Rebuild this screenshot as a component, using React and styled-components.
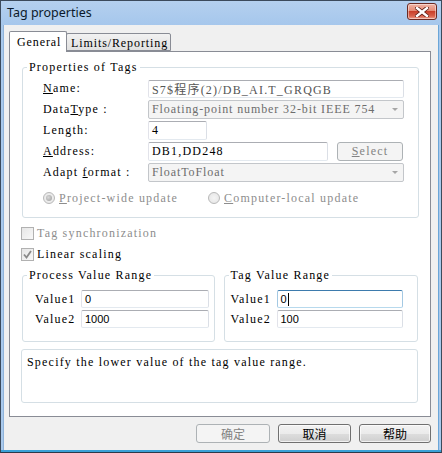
import React from 'react';
import styled, { createGlobalStyle } from 'styled-components';

const sim = `"Liberation Serif", "Noto Sans CJK SC", serif`;
const simText = `
  font-family: ${sim};
  font-size: 12px;
  letter-spacing: 1.2px;
`;

const GlobalStyle = createGlobalStyle`
  html, body {
    margin: 0;
    padding: 0;
    background: #fff;
  }
  * { box-sizing: border-box; }
`;

const Window = styled.div`
  width: 442px;
  height: 453px;
  display: flex;
  flex-direction: column;
  background: #a9c9ec;
  border: 1px solid #3b4a5c;
  border-bottom-color: #2b3a4a;
  box-shadow: inset 0 -2px 0 #3aa0d6;
`;

const TitleBar = styled.div`
  height: 24px;
  display: flex;
  align-items: center;
  justify-content: space-between;
  padding: 0 4px 0 6px;
  background: linear-gradient(#b4d0ef, #a6c7ec);
`;

const Title = styled.span`
  font-family: "Noto Sans", sans-serif;
  font-size: 12.5px;
  color: #0b1a2b;
  margin-top: -2px;
`;

const CloseButton = styled.div`
  width: 30px;
  height: 17px;
  margin-top: -3px;
  border: 1px solid #6b2a22;
  border-radius: 3px;
  background: linear-gradient(#f0b4a6 0%, #e58b75 45%, #c9402a 50%, #d8614a 80%, #eea08c 100%);
  display: flex;
  align-items: center;
  justify-content: center;
  box-shadow: inset 0 0 0 1px rgba(255, 255, 255, 0.45);
`;

const Client = styled.div`
  flex: 1;
  margin: 0 2px 2px 2px;
  background: #f0f0f0;
  border-left: 1px solid #8fb3da;
  border-right: 1px solid #6ba6d8;
  padding: 6px 7px 0 5px;
  display: flex;
  flex-direction: column;
`;

const TabRow = styled.div`
  display: flex;
  align-items: flex-end;
  position: relative;
  z-index: 1;
`;

const Tab = styled.div`
  ${simText}
  letter-spacing: 0.9px;
  color: #000;
  border: 1px solid #898c95;
  height: ${p => (p.$active ? '21px' : '18px')};
  padding: ${p => (p.$active ? '3px 0 0 7px' : '2px 0 0 4px')};
  width: ${p => p.$w}px;
  background: ${p => (p.$active ? '#fff' : 'linear-gradient(#f2f2f2, #e0e0e0)')};
  border-bottom: ${p => (p.$active ? 'none' : '1px solid #898c95')};
  margin-left: ${p => (p.$active ? '0' : '-1px')};
  margin-bottom: ${p => (p.$active ? '-1px' : '0')};
  border-radius: 2px 2px 0 0;
  white-space: nowrap;
`;

const Panel = styled.div`
  height: 366px;
  border: 1px solid #898c95;
  background: #fff;
  display: flex;
  flex-direction: column;
  padding: 0 12px 0 11px;
`;

const Group = styled.fieldset`
  margin: ${p => p.$mt || 0}px 0 0 ${p => p.$ml || 0}px;
  width: ${p => p.$w}px;
  border: 1px solid #d5dfe5;
  border-radius: 3px;
  padding: ${p => p.$pad};
  min-width: 0;
`;

const Legend = styled.legend`
  ${simText}
  line-height: 14px;
  color: #000;
  margin-left: ${p => p.$ml}px;
  padding: 0 2px;
`;

const FormGrid = styled.div`
  display: grid;
  grid-template-columns: 105px 256px;
  grid-auto-rows: 19px;
  row-gap: 2px;
  align-items: center;
`;

const Label = styled.span`
  ${simText}
  color: ${p => (p.$disabled ? '#8d8d8d' : '#000')};
  white-space: pre;
`;

const Field = styled.div`
  height: ${p => p.$h || 19}px;
  width: ${p => (p.$w ? `${p.$w}px` : '100%')};
  border: 1px solid;
  border-color: ${p => (p.$focus ? '#3d7bad #a4c9e3 #b7d9ed #a4c9e3' : '#abadb3 #dbdfe6 #e3e9ef #e2e3ea')};
  border-radius: 2px;
  background: #fff;
  display: flex;
  align-items: center;
  padding-left: 3px;
  ${p => (p.$sans ? 'font-family: "Liberation Sans", sans-serif; font-size: 11px;' : simText)}
  color: ${p => p.$color || '#000'};
  white-space: pre;
  overflow: hidden;
`;

const Combo = styled.div`
  height: 19px;
  border: 1px solid #c3c6ca;
  border-radius: 2px;
  background: #f4f4f4;
  display: flex;
  align-items: center;
  justify-content: space-between;
  padding: 0 5px 0 3px;
  ${simText}
  letter-spacing: 0.9px;
  color: #6d6d6d;
  white-space: pre;
`;

const Arrow = styled.span`
  width: 0;
  height: 0;
  border-left: 3px solid transparent;
  border-right: 3px solid transparent;
  border-top: 3px solid #a6a6a6;
`;

const AddressRow = styled.div`
  display: flex;
  align-items: center;
  gap: 9px;
`;

const SmallButton = styled.div`
  width: 66px;
  height: 19px;
  border: 1px solid #adb2b5;
  border-radius: 3px;
  background: #f4f4f4;
  display: flex;
  align-items: center;
  justify-content: center;
  ${simText}
  color: #838383;
`;

const U = styled.span`
  text-decoration: underline;
  text-underline-offset: 1px;
`;

const RadioRow = styled.div`
  display: flex;
  align-items: center;
  margin-top: 9px;
  height: 14px;
`;

const RadioItem = styled.div`
  display: flex;
  align-items: center;
  gap: 4px;
  width: ${p => p.$w}px;
`;

const Radio = styled.span`
  width: 12px;
  height: 12px;
  border-radius: 50%;
  border: 1px solid #b8b8b8;
  background: radial-gradient(circle, #f4f4f4 0%, #e4e4e4 100%);
  display: flex;
  align-items: center;
  justify-content: center;
  &::after {
    content: '';
    width: 6px;
    height: 6px;
    border-radius: 50%;
    background: ${p => (p.$on ? 'radial-gradient(circle at 40% 40%, #d8d8d8, #9c9c9c)' : 'transparent')};
  }
`;

const CheckRow = styled.div`
  display: flex;
  align-items: center;
  gap: 3px;
  height: 14px;
  margin-top: ${p => p.$mt}px;
`;

const Box = styled.span`
  width: 13px;
  height: 13px;
  border: 1px solid #b1b1b1;
  background: linear-gradient(135deg, #e6e6e6, #f8f8f8);
  display: flex;
  align-items: center;
  justify-content: center;
`;

const RangeRow = styled.div`
  display: flex;
  gap: 9px;
  margin-top: 7px;
`;

const ValueGrid = styled.div`
  display: grid;
  grid-template-columns: ${p => p.$lw}px 1fr;
  grid-auto-rows: 18px;
  row-gap: 2px;
  align-items: center;
`;

const Caret = styled.span`
  width: 1px;
  height: 13px;
  background: #000;
  margin-left: 1px;
`;

const Description = styled.div`
  margin-top: 7px;
  height: 54px;
  border: 1px solid #d5dfe5;
  border-radius: 3px;
  padding: 5px 5px;
  ${simText}
  line-height: 14px;
  color: #000;
`;

const ButtonBar = styled.div`
  display: flex;
  justify-content: flex-end;
  gap: 8px;
  margin-top: 7px;
`;

const DialogButton = styled.div`
  width: ${p => p.$w}px;
  height: 19px;
  border: 1px solid ${p => (p.$disabled ? '#adb2b5' : '#707070')};
  border-radius: 3px;
  background: ${p => (p.$disabled ? '#f4f4f4' : 'linear-gradient(#f2f2f2 0%, #ebebeb 50%, #dddddd 51%, #cfcfcf 100%)')};
  display: flex;
  align-items: center;
  justify-content: center;
  font-family: "Noto Sans CJK SC", sans-serif;
  font-size: 12px;
  color: ${p => (p.$disabled ? '#838383' : '#000')};
  box-shadow: ${p => (p.$disabled ? 'none' : 'inset 0 0 0 1px rgba(255,255,255,0.7)')};
`;

const CloseIcon = () => (
  <svg width="14" height="10" viewBox="0 0 14 10">
    <path d="M2 1 L12 9 M12 1 L2 9" stroke="#5b1d14" strokeWidth="4" strokeLinecap="square" />
    <path d="M2 1 L12 9 M12 1 L2 9" stroke="#fff" strokeWidth="2.4" strokeLinecap="square" />
  </svg>
);

const CheckMark = () => (
  <svg width="9" height="9" viewBox="0 0 9 9">
    <path d="M1 4.5 L3.5 7.5 L8 1" fill="none" stroke="#8a8a8a" strokeWidth="1.8" />
  </svg>
);

const App = () => {
  return (
    <>
      <GlobalStyle />
      <Window>
        <TitleBar>
          <Title>Tag properties</Title>
          <CloseButton><CloseIcon /></CloseButton>
        </TitleBar>
        <Client>
          <TabRow>
            <Tab $active $w={58}>General</Tab>
            <Tab $w={105}>Limits/Reporting</Tab>
          </TabRow>
          <Panel>
            <Group $mt={8} $ml={1} $w={397} $pad="5px 14px 12px 20px">
              <Legend $ml={-16}>Properties of Tags</Legend>
              <FormGrid>
                <Label><U>N</U>ame:</Label>
                <Field $h={18} $color="#555">S7$程序(2)/DB_AI.T_GRQGB</Field>
                <Label>Data<U>T</U>ype :</Label>
                <Combo>Floating-point number 32-bit IEEE 754<Arrow /></Combo>
                <Label>Length:</Label>
                <Field $w={59}>4</Field>
                <Label><U>A</U>ddress:</Label>
                <AddressRow>
                  <Field $w={180}>DB1,DD248</Field>
                  <SmallButton><U>S</U>elect</SmallButton>
                </AddressRow>
                <Label>Adapt <U>f</U>ormat :</Label>
                <Combo>FloatToFloat<Arrow /></Combo>
              </FormGrid>
              <RadioRow>
                <RadioItem $w={165}>
                  <Radio $on />
                  <Label $disabled><U>P</U>roject-wide update</Label>
                </RadioItem>
                <RadioItem $w={160}>
                  <Radio />
                  <Label $disabled><U>C</U>omputer-local update</Label>
                </RadioItem>
              </RadioRow>
            </Group>
            <CheckRow $mt={8}>
              <Box />
              <Label $disabled>Tag synchronization</Label>
            </CheckRow>
            <CheckRow $mt={7}>
              <Box><CheckMark /></Box>
              <Label>Linear scaling</Label>
            </CheckRow>
            <RangeRow>
              <Group $ml={1} $w={193} $pad="8px 5px 13px 12px">
                <Legend $ml={-8}>Process Value Range</Legend>
                <ValueGrid $lw={46}>
                  <Label>Value1</Label>
                  <Field $h={18} $sans>0</Field>
                  <Label>Value2</Label>
                  <Field $h={18} $sans>1000</Field>
                </ValueGrid>
              </Group>
              <Group $w={195} $pad="8px 14px 13px 6px">
                <Legend $ml={-2}>Tag Value Range</Legend>
                <ValueGrid $lw={46}>
                  <Label>Value1</Label>
                  <Field $h={18} $sans $focus>0<Caret /></Field>
                  <Label>Value2</Label>
                  <Field $h={18} $sans>100</Field>
                </ValueGrid>
              </Group>
            </RangeRow>
            <Description>Specify the lower value of the tag value range.</Description>
          </Panel>
          <ButtonBar>
            <DialogButton $w={74} $disabled>确定</DialogButton>
            <DialogButton $w={73}>取消</DialogButton>
            <DialogButton $w={72}>帮助</DialogButton>
          </ButtonBar>
        </Client>
      </Window>
    </>
  );
};

export default App;
